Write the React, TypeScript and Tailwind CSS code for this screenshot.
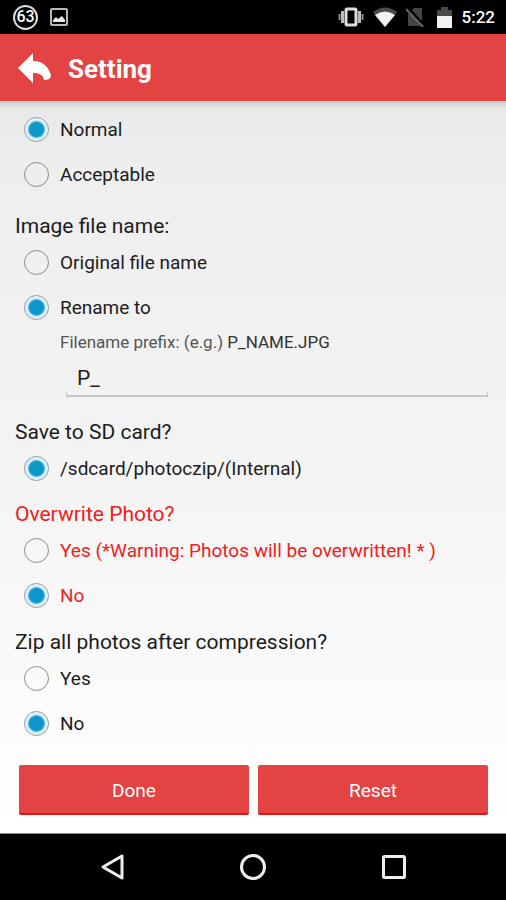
import React, { useState } from 'react';

interface OptionProps {
  name: string;
  label: string;
  checked: boolean;
  onChange: () => void;
  warning?: boolean;
}

const Option: React.FC<OptionProps> = ({ name, label, checked, onChange, warning }) => (
  <label className={`flex h-[45px] items-center gap-[11px] pl-[24px] text-[19px] ${warning ? 'text-[#f02020]' : 'text-[#1c1c1c]'}`}>
    <input
      type="radio"
      name={name}
      checked={checked}
      onChange={onChange}
      className="size-[25px] shrink-0 appearance-none rounded-full border border-[#8c8c8c] checked:border-[#8a9ba3] checked:bg-[radial-gradient(circle,#0c98cb_0_7px,#cdeaf5_9px,#eef8fc_11px)]"
    />
    <span className="pt-[2px]">{label}</span>
  </label>
);

interface SectionProps {
  title: string;
  warning?: boolean;
  className?: string;
  children: React.ReactNode;
}

const Section: React.FC<SectionProps> = ({ title, warning, className = '', children }) => (
  <fieldset className={className}>
    <legend className={`h-7 pl-[15px] text-[21px] leading-7 ${warning ? 'text-[#f02020]' : 'text-[#1c1c1c]'}`}>{title}</legend>
    {children}
  </fieldset>
);

const StatusBar: React.FC = () => (
  <div className="flex h-[34px] items-center justify-between bg-black pr-[11px] pl-[13px] text-white">
    <div className="flex items-center gap-3">
      <span className="flex size-[25px] items-center justify-center rounded-full border-2 border-[#dcdcdc] text-[16px] font-medium">63</span>
      <svg className="size-[18px]" viewBox="0 0 18 18" aria-hidden="true">
        <rect x="1" y="1" width="16" height="16" rx="1" fill="none" stroke="#b8b8b8" strokeWidth="2" />
        <path d="M3 14V12L6 9L8 11L12 8L15 12V14Z" fill="#e8e8e8" />
      </svg>
    </div>
    <div className="flex items-center">
      <svg className="h-5 w-[26px]" viewBox="0 0 26 20" aria-hidden="true">
        <rect x="8" y="2" width="10" height="16" rx="1" fill="none" stroke="#dedede" strokeWidth="3" />
        <path d="M4.500 4V16M21.500 4V16" stroke="#bdbdbd" strokeWidth="3" />
        <path d="M1.500 7V13M24.500 7V13" stroke="#8c8c8c" strokeWidth="2" />
      </svg>
      <svg className="ml-[9px] h-5 w-6" viewBox="0 0 24 20" aria-hidden="true">
        <path d="M0 5Q12 -4 24 5L12 20Z" fill="#4a4a4a" />
        <path d="M2 8Q12 1 22 8L12 20Z" fill="#f2f2f2" />
      </svg>
      <svg className="ml-[9px] h-5 w-[19px]" viewBox="0 0 19 20" aria-hidden="true">
        <path d="M8 1H16V19H2V7Z" fill="#444" />
        <path d="M1 1L18 19" stroke="#000" strokeWidth="4" />
        <path d="M0 2L17 20" stroke="#666" strokeWidth="2" />
      </svg>
      <svg className="ml-[12px] h-[21px] w-[15px]" viewBox="0 0 15 21" aria-hidden="true">
        <path d="M0 3H4V0H11V3H15V9H0Z" fill="#4a4a4a" />
        <path d="M0 9H15V21H0Z" fill="#f2f2f2" />
      </svg>
      <span className="ml-[10px] pt-[2px] text-[17px] font-medium">5:22</span>
    </div>
  </div>
);

const App: React.FC = () => {
  const [quality, setQuality] = useState('normal');
  const [naming, setNaming] = useState('rename');
  const [prefix, setPrefix] = useState('P_');
  const [overwrite, setOverwrite] = useState(false);
  const [zip, setZip] = useState(false);

  return (
    <div className="flex min-h-screen flex-col bg-white font-['Roboto',sans-serif]">
      <StatusBar />

      <header className="flex h-[67px] items-center gap-[17px] bg-[#e34343] pl-[18px] text-white">
        <button type="button" aria-label="Back">
          <svg className="h-[30px] w-[33px]" viewBox="0 0 33 30" aria-hidden="true">
            <path d="M0 15L15 0V8C25 8 31 14 33 23C32 26 30 27 26 27C25 22 22 20 15 20V30Z" fill="#fff" />
          </svg>
        </button>
        <h1 className="pt-1 text-[26px] font-bold">Setting</h1>
      </header>

      <main className="flex-1 bg-[linear-gradient(#cfcfcf,#e9e9e9_8px,#eeeeee_60px,#f3f3f3_45%,#ffffff)] pt-[6px] pb-[18px]">
        <fieldset aria-label="Quality">
          <Option name="quality" label="Normal" checked={quality === 'normal'} onChange={() => setQuality('normal')} />
          <Option name="quality" label="Acceptable" checked={quality === 'acceptable'} onChange={() => setQuality('acceptable')} />
        </fieldset>

        <Section title="Image file name:" className="mt-[15px]">
          <Option name="naming" label="Original file name" checked={naming === 'original'} onChange={() => setNaming('original')} />
          <Option name="naming" label="Rename to" checked={naming === 'rename'} onChange={() => setNaming('rename')} />
          <div className="pr-[18px] pl-[60px]">
            <label htmlFor="prefix" className="block h-6 text-[17px] leading-6 text-[#555]">
              Filename prefix: (e.g.) <span className="text-[#333]">P_NAME.JPG</span>
            </label>
            <div className="pt-2 pl-[6px]">
              <input
                id="prefix"
                type="text"
                value={prefix}
                onChange={(e) => setPrefix(e.target.value)}
                className="block h-[30px] w-full bg-transparent px-[11px] pt-1 text-[21px] text-[#222] outline-none"
              />
              <div className="h-[5px] border-x border-b-2 border-[#c8c8c8]" />
            </div>
          </div>
        </Section>

        <Section title="Save to SD card?" className="mt-[21px]">
          <Option name="storage" label="/sdcard/photoczip/(Internal)" checked onChange={() => {}} />
        </Section>

        <Section title="Overwrite Photo?" warning className="mt-[9px]">
          <Option name="overwrite" label="Yes (*Warning: Photos will be overwritten! * )" warning checked={overwrite} onChange={() => setOverwrite(true)} />
          <Option name="overwrite" label="No" warning checked={!overwrite} onChange={() => setOverwrite(false)} />
        </Section>

        <Section title="Zip all photos after compression?" className="mt-[10px]">
          <Option name="zip" label="Yes" checked={zip} onChange={() => setZip(true)} />
          <Option name="zip" label="No" checked={!zip} onChange={() => setZip(false)} />
        </Section>

        <div className="mt-[19px] flex gap-[9px] pr-[18px] pl-[19px]">
          <button type="button" className="h-[50px] flex-1 rounded-[2px] border-b-2 border-[#d81818] bg-[#e34343] pt-1 text-[19px] text-white">
            Done
          </button>
          <button type="button" className="h-[50px] flex-1 rounded-[2px] border-b-2 border-[#d81818] bg-[#e34343] pt-1 text-[19px] text-white">
            Reset
          </button>
        </div>
      </main>

      <nav className="flex h-[67px] items-center justify-center gap-[113px] border-t border-[#8a8a8a] bg-black">
        <button type="button" aria-label="Back">
          <svg className="size-7" viewBox="0 0 28 28" aria-hidden="true">
            <path d="M5 14L24 3V25Z" fill="none" stroke="#eee" strokeWidth="3" strokeLinejoin="round" />
          </svg>
        </button>
        <button type="button" aria-label="Home">
          <svg className="size-7" viewBox="0 0 28 28" aria-hidden="true">
            <circle cx="14" cy="14" r="11.500" fill="none" stroke="#eee" strokeWidth="3" />
          </svg>
        </button>
        <button type="button" aria-label="Recent apps">
          <svg className="size-7" viewBox="0 0 28 28" aria-hidden="true">
            <rect x="3.500" y="3.500" width="21" height="21" rx="1" fill="none" stroke="#eee" strokeWidth="3" />
          </svg>
        </button>
      </nav>
    </div>
  );
};

export default App;
